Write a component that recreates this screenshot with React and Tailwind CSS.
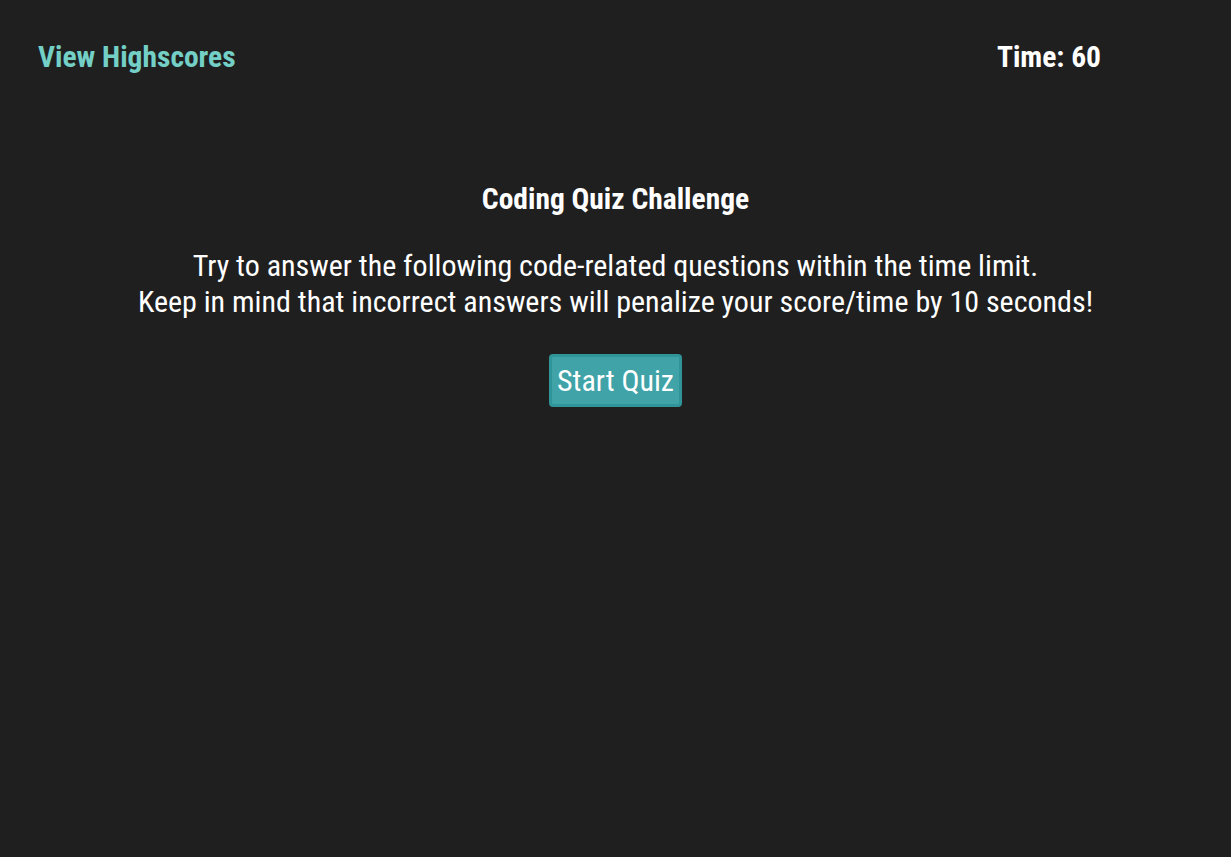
export default function App() {
  return (
    <div
      className="min-h-[857px] bg-[#1f1f1f] text-white font-stretch-condensed"
      style={{ fontFamily: '"Roboto", "Liberation Sans", sans-serif' }}
    >
      <header className="flex items-center justify-between pl-[38px] pr-[130px] pt-[38px]">
        <a href="#" className="text-[29.5px] leading-[38px] font-bold text-[#74cfc6]">
          View Highscores
        </a>
        <div className="text-[29.5px] leading-[38px] font-bold">Time: 60</div>
      </header>

      <main className="flex flex-col items-center text-center mt-[104px]">
        <h1 className="text-[29.5px] leading-[38px] font-bold">Coding Quiz Challenge</h1>
        <p className="mt-[30px] text-[30px] leading-[36px]">
          Try to answer the following code-related questions within the time limit.
          <br />
          Keep in mind that incorrect answers will penalize your score/time by 10 seconds!
        </p>
        <button className="mt-[34px] h-[53px] px-[5px] rounded-[4px] border-[3px] border-[#2f9599] bg-[#3fa3a8] text-[30px] leading-none text-white">
          Start Quiz
        </button>
      </main>
    </div>
  )
}
